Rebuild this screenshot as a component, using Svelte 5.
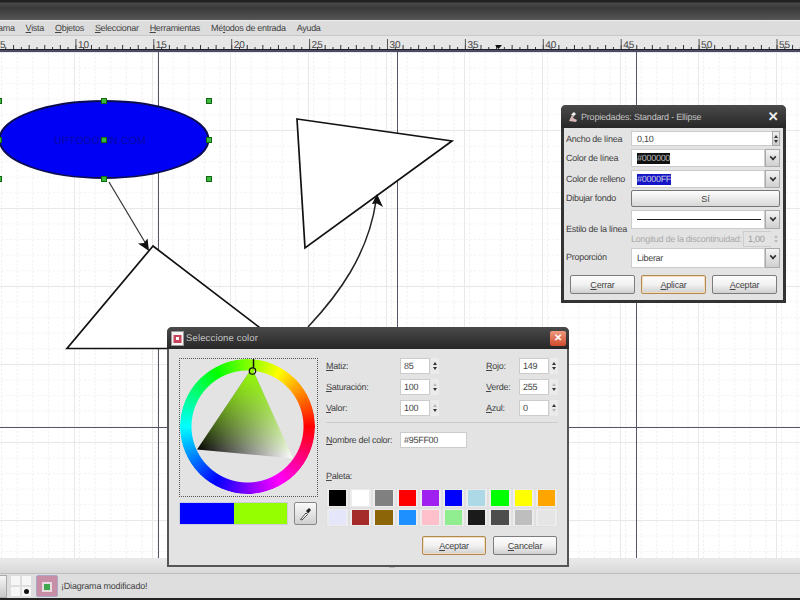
<script>
  const menus = [
    ['ama', ''], ['V', 'ista'], ['O', 'bjetos'], ['S', 'eleccionar'], ['H', 'erramientas'], ['Mé', 'todos de entrada'], ['Ayuda', '']
  ];
  const labels = [5, 10, 15, 20, 25, 30, 35, 40, 45, 50, 55];
  const ticks = Array.from({ length: 104 }, (_, i) => i * 7.79 - 2);
  const handles = [[-1,101],[104,101],[209,101],[-1,140],[104,140],[209,140],[-1,179],[104,179],[209,179]];
  const palette = ['#000000','#ffffff','#808080','#ff0000','#a020f0','#0000ff','#add8e6','#00ff00','#ffff00','#ffa500',
    '#e6e6fa','#a52a2a','#8b6508','#1e90ff','#ffc0cb','#90ee90','#1a1a1a','#4d4d4d','#bebebe','#e5e5e5'];
  const hsv = [['M','atiz:','85',1,1],['S','aturación:','100',0,1],['V','alor:','100',0,1]];
  const rgb = [['R','ojo:','149',1,1],['V','erde:','255',0,1],['A','zul:','0',1,0]];
</script>

<div class="app">
  <div class="titlebar"></div>
  <nav class="menubar">
    {#each menus as m, i}
      <span class="menu">{#if m[1] && i !== 5}<u>{m[0]}</u>{m[1]}{:else if i === 5}Mé<u>t</u>odos de entrada{:else}{m[0]}{/if}</span>
    {/each}
  </nav>
  <div class="ruler">
    <svg width="800" height="16" viewBox="0 0 800 16">
      {#each ticks as t, i}
        <line x1={t} x2={t} y1={i % 2 === 0 ? 9 : 11} y2="13" stroke="#333" stroke-width="1"></line>
      {/each}
      {#each labels as l, i}
        <line x1={-2 + i * 77.9} x2={-2 + i * 77.9} y1="3" y2="13" stroke="#555"></line>
        <text x={i * 77.9} y="12" class="rl">{l}</text>
      {/each}
      <path d="M495 9h7l-3.500 4z" fill="#111"></path>
      <rect x="0" y="13" width="800" height="1" fill="#222"></rect>
      <rect x="0" y="14" width="800" height="2" fill="#4b4a68"></rect>
    </svg>
  </div>

  <main class="canvas">
    <svg class="drawing" width="800" height="508" viewBox="0 52 800 508">
      <defs>
        <pattern id="minor" width="15.6" height="15.6" patternUnits="userSpaceOnUse" x="2" y="6">
          <path d="M15.500 0V15.600M0 15.500H15.600" fill="none" stroke="#e4e4e4" stroke-dasharray="2 2"></path>
        </pattern>
        <pattern id="major" width="78" height="78" patternUnits="userSpaceOnUse" x="-3" y="53">
          <path d="M77.500 0V78M0 77.500H78" fill="none" stroke="#e8e8e8"></path>
        </pattern>
      </defs>
      <rect x="0" y="52" width="800" height="506" fill="#fff"></rect>
      <rect x="0" y="52" width="800" height="506" fill="url(#minor)"></rect>
      <rect x="0" y="52" width="800" height="506" fill="url(#major)"></rect>
      <rect x="0" y="558" width="800" height="2" fill="#e8e8e8"></rect>
      <path d="M158.500 52V558M397.500 52V558M636.500 52V558M0 427.500H800" stroke="#55556a" fill="none"></path>

      <ellipse cx="104" cy="139.500" rx="104.500" ry="38.500" fill="#0000f5" stroke="#0c0c50" stroke-width="1.800"></ellipse>
      <text x="100" y="144" class="wm" text-anchor="middle">UPTODOWN.COM</text>

      <path d="M109 182L146 244" stroke="#333" stroke-width="1.200" fill="none"></path>
      <path d="M149 251L138 243.500L144 243L147.500 238.500Z" fill="#111"></path>
      <path d="M153 246L67 348.500H287Z" fill="#fff" stroke="#111" stroke-width="1.700"></path>
      <path d="M297 119L452 141L305 248Z" fill="#fff" stroke="#111" stroke-width="1.700"></path>
      <path d="M308 327C338 295 368 255 376 201" stroke="#222" stroke-width="1.500" fill="none"></path>
      <path d="M377 194L383 207L377 203.500L372 204Z" fill="#111"></path>

      {#each handles as h}
        <rect x={h[0] - 2.500} y={h[1] - 2.500} width="5" height="5" fill="#3db83d" stroke="#0f6a0f"></rect>
      {/each}
    </svg>

    <section class="win props">
      <header class="wtitle">
        <svg class="ticon" width="12" height="12" viewBox="0 0 12 12"><path d="M2 10L5 4l2 1-1 2 4 2-1 2z" fill="#d8b8b8"></path><path d="M4 3.500L7 1l2 2-2 2z" fill="#eee"></path></svg>
        <span class="ttext">Propiedades: Standard - Ellipse</span>
        <span class="x">✕</span>
      </header>
      <div class="pbody">
        <div class="prow r1"><span>Ancho de línea</span>
          <span class="entry spin1">0,10<span class="arrows"><i class="up"></i><i class="dn"></i></span></span>
        </div>
        <div class="prow r2"><span>Color de línea</span>
          <div class="combo"><span class="cval"><b class="sel blk">#000000</b></span><span class="cbtn"></span></div>
        </div>
        <div class="prow r3"><span>Color de relleno</span>
          <div class="combo"><span class="cval"><b class="sel blu">#0000FF</b></span><span class="cbtn"></span></div>
        </div>
        <div class="prow r4"><span>Dibujar fondo</span><button class="toggle">Sí</button></div>
        <div class="prow r5"><span class="mid">Estilo de la línea</span>
          <div class="linebox">
            <div class="combo c5"><span class="cval"><i class="ln"></i></span><span class="cbtn"></span></div>
            <div class="dash"><span>Longitud de la discontinuidad:</span><span class="dashval">1,00<span class="arrows dis"><i class="up"></i><i class="dn"></i></span></span></div>
          </div>
        </div>
        <div class="prow r6"><span>Proporción</span>
          <div class="combo c6"><span class="cval">Liberar</span><span class="cbtn"></span></div>
        </div>
        <div class="pbtns">
          <button class="btn"><u>C</u>errar</button>
          <button class="btn def"><u>A</u>plicar</button>
          <button class="btn"><u>A</u>ceptar</button>
        </div>
      </div>
    </section>

    <section class="win colors">
      <header class="wtitle ctitle">
        <svg class="dicon" width="13" height="15" viewBox="0 0 13 15"><rect x=".5" y=".5" width="12" height="14" fill="#f5f5f5" stroke="#999"></rect><rect x="2.500" y="4" width="8" height="8" fill="#c7445c"></rect><rect x="5" y="6" width="3" height="3" fill="#fff"></rect></svg>
        <span class="ttext t2">Seleccione color</span>
        <span class="xred">✕</span>
      </header>
      <div class="cbody">
        <div class="cleft">
          <div class="wheelbox">
            <div class="wheel"></div>
            <svg class="tri" width="135" height="135" viewBox="0 0 135 135">
              <defs>
                <linearGradient id="bw" gradientUnits="userSpaceOnUse" x1="17" y1="90" x2="113" y2="99">
                  <stop offset="0" stop-color="#000"></stop><stop offset="1" stop-color="#fff"></stop>
                </linearGradient>
                <linearGradient id="hue" gradientUnits="userSpaceOnUse" x1="72" y1="9" x2="65" y2="95">
                  <stop offset="0" stop-color="#95ff00"></stop><stop offset="1" stop-color="#95ff00" stop-opacity="0"></stop>
                </linearGradient>
              </defs>
              <path d="M72 9L17 90.500L113 99.500Z" fill="url(#bw)"></path>
              <path d="M72 9L17 90.500L113 99.500Z" fill="url(#hue)"></path>
              <path d="M73.500 0V9" stroke="#111" stroke-width="1.500"></path>
              <circle cx="72.500" cy="12" r="3.200" fill="none" stroke="#111" stroke-width="1.300"></circle>
            </svg>
          </div>
          <div class="swrow">
            <div class="swatches"><i class="old"></i><i class="new"></i></div>
            <button class="pick" aria-label="Cuentagotas">
              <svg width="14" height="15" viewBox="0 0 14 15"><path d="M1.500 13.500L7 7l1.500 1.500L3 14z" fill="#fff" stroke="#333" stroke-width=".9"></path><path d="M7 5l3-3 2 2-3 3.500z" fill="#222"></path></svg>
            </button>
          </div>
        </div>
        <div class="cright">
          <div class="fields">
            <div class="col">
              {#each hsv as f}
                <div class="frow"><span class="flabel w1"><u>{f[0]}</u>{f[1]}</span>
                  <span class="num">{f[2]}</span>
                  <span class="arrows nf"><i class="up" class:off={!f[3]}></i><i class="dn" class:off={!f[4]}></i></span>
                </div>
              {/each}
            </div>
            <div class="col">
              {#each rgb as f}
                <div class="frow"><span class="flabel w2"><u>{f[0]}</u>{f[1]}</span>
                  <span class="num">{f[2]}</span>
                  <span class="arrows nf"><i class="up" class:off={!f[3]}></i><i class="dn" class:off={!f[4]}></i></span>
                </div>
              {/each}
            </div>
          </div>
          <hr />
          <div class="namerow"><span class="flabel w1"><u>N</u>ombre del color:</span><span class="nameval">#95FF00</span></div>
          <div class="plabel"><u>P</u>aleta:</div>
          <div class="palette">
            {#each palette as c}
              <span class="pcell"><i style="background:{c}"></i></span>
            {/each}
          </div>
          <div class="cbtns">
            <button class="btn b2 def"><u>A</u>ceptar</button>
            <button class="btn b2"><u>C</u>ancelar</button>
          </div>
        </div>
      </div>
    </section>
  </main>

  <div class="hscroll"><span class="grip"></span></div>

  <footer class="status">
    <span class="sbtn"></span>
    <span class="snap"><i></i><i></i><i></i><i class="dot"></i></span>
    <span class="layer"><i></i></span>
    <span class="smsg">¡Diagrama modificado!</span>
  </footer>
</div>

<style>
  :global(body) { margin: 0; background: #fff; }
  .app { width: 800px; height: 600px; overflow: hidden; display: flex; flex-direction: column; font-family: "Liberation Sans", Arial, sans-serif; font-size: 9px; letter-spacing: -.28px; color: #444; text-rendering: geometricPrecision; }
  u { text-decoration: underline; }
  i { display: block; font-style: normal; }
  .titlebar { height: 20px; flex: none; background: linear-gradient(#222 0, #222 2px, #4a4a4a 3px, #3a3a3a 8px, #555 20px); }
  .menubar { height: 16px; flex: none; box-sizing: border-box; background: #dcdcdc; border-top: 1px solid #eee; border-bottom: 1px solid #c8c8c8; display: flex; align-items: center; gap: 11px; margin-left: -2px; margin-right: -2px; letter-spacing: -.3px; }
  .ruler { height: 16px; flex: none; background: #e6e6e6; }
  .ruler svg { display: block; }
  .rl { font: 10px "Liberation Sans", sans-serif; fill: #444; letter-spacing: 0; }
  .canvas { position: relative; z-index: 1; height: 508px; flex: none; }
  .drawing { display: block; }
  .wm { font: 10.500px "Liberation Sans", sans-serif; fill: #0808a4; letter-spacing: .2px; }

  .hscroll { height: 13px; flex: none; box-sizing: border-box; background: linear-gradient(#e8e8e8, #d8d8d8); display: flex; padding-left: 389px; padding-top: 6px; }
  .grip { width: 6px; height: 2px; background: #bbb; }

  .win { position: absolute; box-sizing: border-box; background: #e3e3e3; border-radius: 5px 5px 0 0; }
  .props { left: 561px; top: 53px; width: 225px; height: 198px; border: 3px solid #333; border-top: 0; }
  .colors { left: 167px; top: 275px; width: 402px; height: 240px; border: 2px solid #555; border-top: 0; border-bottom-width: 2px; }
  .wtitle { display: flex; align-items: center; height: 23px; background: linear-gradient(#4a4a4a, #272727); color: #c4c4c4; margin: 0 -3px; padding: 0 5px 0 6px; border-radius: 5px 5px 0 0; }
  .ctitle { height: 22px; margin: 0 -2px; padding: 0 3px 0 4px; }
  .ticon { margin-right: 2px; }
  .dicon { margin-right: 2px; }
  .ttext { flex: 1; font-size: 9px; letter-spacing: -.2px; }
  .t2 { font-size: 9.500px; letter-spacing: .15px; }
  .x { font-size: 13px; font-weight: bold; color: #eee; width: 16px; text-align: center; }
  .xred { width: 16px; height: 15px; font-size: 10px; font-weight: bold; color: #fff; background: linear-gradient(#ee9a80, #cf4a2a); border-radius: 2px; display: flex; align-items: center; justify-content: center; }

  .pbody { display: flex; flex-direction: column; padding: 3px 3px 0 2px; }
  .prow { display: grid; grid-template-columns: 65px minmax(0, 1fr); align-items: start; white-space: nowrap; }
  .prow > span:first-child { line-height: 16px; }
  .prow > span.mid { align-self: center; }
  .r1 { height: 18px; }
  .r2 { height: 21px; }
  .r3, .r4 { height: 20px; }
  .r5 { height: 38px; }
  .r6 { height: 22px; }
  .r2 > span:first-child, .r3 > span:first-child, .r6 > span:first-child { line-height: 18px; }
  .entry { position: relative; background: #fff; border: 1px solid #ccc; height: 15px; line-height: 14px; padding-left: 5px; box-sizing: border-box; }
  .arrows { display: flex; flex-direction: column; gap: 2px; align-items: center; justify-content: center; }
  .spin1 .arrows { position: absolute; right: -1px; top: -1px; bottom: -1px; width: 8px; background: linear-gradient(#f0f0f0, #ccc); border: 1px solid #aaa; box-sizing: border-box; }
  .up { width: 0; height: 0; border: 2.500px solid transparent; border-top: 0; border-bottom: 3px solid #333; }
  .dn { width: 0; height: 0; border: 2.500px solid transparent; border-bottom: 0; border-top: 3px solid #333; }
  .up.off { border-bottom-color: #bbb; }
  .dn.off { border-top-color: #bbb; }
  .combo { display: flex; height: 18px; }
  .cval { flex: 1; background: #fff; border: 1px solid #ccc; padding-left: 5px; display: flex; align-items: center; box-sizing: border-box; min-width: 0; }
  .cbtn { width: 15px; flex: none; position: relative; background: linear-gradient(#f4f4f4, #cfcfcf); border: 1px solid #aaa; box-sizing: border-box; }
  .cbtn::after { content: ""; position: absolute; left: 4px; top: 4px; width: 4px; height: 4px; border: solid #333; border-width: 0 2px 2px 0; transform: rotate(45deg) scale(.8); }
  .c5 { height: 19px; }
  .c6 { height: 20px; }
  .sel { font-weight: normal; padding: 0; line-height: 11px; }
  .blk { background: #111; color: #bbb; }
  .blu { background: #1515c8; color: #ccd; }
  .toggle { height: 17px; padding: 0; background: linear-gradient(#fdfdfd, #d8d8d8); border: 1px solid #777; border-radius: 2px; font: 9px "Liberation Sans", sans-serif; color: #444; }
  .linebox { display: flex; flex-direction: column; min-width: 0; }
  .ln { flex: 1; height: 1.500px; background: #222; margin-right: 3px; }
  .dash { display: flex; align-items: center; justify-content: space-between; height: 19px; color: #aaa; }
  .dashval { position: relative; width: 37px; height: 16px; line-height: 15px; box-sizing: border-box; border: 1px solid #ccc; padding-left: 4px; color: #999; }
  .dashval .arrows { position: absolute; right: -1px; top: -1px; bottom: -1px; width: 9px; background: #e3e3e3; }
  .dis .up { border-bottom-color: #bbb; }
  .dis .dn { border-top-color: #bbb; }
  .pbtns { display: flex; gap: 6px; padding: 5px 0 0 4px; }
  .btn { width: 65px; height: 19px; padding: 0; background: linear-gradient(#fcfcfc 0, #f2f2f2 50%, #cfcfcf 100%); border: 1px solid #7c7c7c; border-radius: 2px; font: 9px "Liberation Sans", sans-serif; color: #444; letter-spacing: -.2px; }
  .btn.def { border-color: #b08a50; box-shadow: inset 0 0 0 1px #f1dcc0; }

  .cbody { display: flex; padding: 9px 9px 0 10px; }
  .cleft { width: 139px; flex: none; display: flex; flex-direction: column; gap: 5px; }
  .wheelbox { position: relative; width: 137px; height: 137px; border: 1px dotted #555; box-sizing: content-box; }
  .wheel { position: absolute; left: 0; top: 0; width: 135px; height: 135px; border-radius: 50%; background: conic-gradient(from 90deg, #f00, #f0f, #00f, #0ff, #0f0, #ff0, #f00); mask: radial-gradient(circle, transparent 55.500px, #000 56.500px); -webkit-mask: radial-gradient(circle, transparent 55.500px, #000 56.500px); }
  .tri { position: absolute; left: 0; top: 0; }
  .swrow { display: flex; align-items: center; justify-content: space-between; width: 138px; }
  .swatches { display: flex; border: 1px solid #ccd; }
  .swatches i { width: 53.500px; height: 21px; }
  .old { background: #0000ff; }
  .new { background: #95ff00; }
  .pick { width: 23px; height: 23px; padding: 0; display: flex; align-items: center; justify-content: center; background: linear-gradient(#fafafa, #cfcfcf); border: 1px solid #888; border-radius: 2px; }
  .cright { flex: 1; padding-left: 8px; display: flex; flex-direction: column; min-width: 0; }
  .fields { display: flex; justify-content: space-between; }
  .col { display: flex; flex-direction: column; gap: 5px; }
  .frow { display: flex; align-items: center; height: 16px; }
  .flabel { display: block; }
  .w1 { width: 74px; }
  .w2 { width: 33px; }
  .num { width: 30px; height: 16px; line-height: 14px; box-sizing: border-box; background: #fff; border: 1px solid #ccc; padding-left: 3px; }
  .nf { width: 8px; margin-left: 1px; height: 16px; gap: 2px; background: #ebebeb; }
  hr { border: 0; border-top: 1px solid #ccc; margin: 6px 0 9px; }
  .namerow { display: flex; align-items: center; height: 16px; }
  .nameval { width: 67px; height: 16px; line-height: 14px; box-sizing: border-box; background: #fff; border: 1px solid #ccc; padding-left: 3px; }
  .plabel { margin-top: 23px; height: 14px; }
  .palette { display: grid; grid-template-columns: repeat(10, 23.2px); grid-auto-rows: 19.500px; margin-top: 3px; }
  .pcell { background: #ececec; border: 1px solid #e0e0e0; box-sizing: border-box; display: block; padding: 1px 2px; }
  .pcell i { height: 100%; }
  .cbtns { display: flex; justify-content: flex-end; gap: 7px; margin-top: 9px; padding-right: 1px; }
  .b2 { width: 64px; }

  .status { height: 27px; flex: none; background: #dedede; border-top: 1px solid #bdbdbd; border-bottom: 2px solid #222; box-sizing: border-box; display: flex; align-items: center; }
  .sbtn { width: 7px; height: 23px; background: linear-gradient(#f6f6f6, #c9c9c9); border: 1px solid #aaa; border-left: 0; box-sizing: border-box; }
  .snap { display: grid; grid-template-columns: 9px 9px; grid-auto-rows: 9px; gap: 2px; margin-left: 4px; }
  .snap i { background: #f6f6f6; position: relative; }
  .snap .dot::after { content: ""; position: absolute; left: 2px; top: 2px; width: 5px; height: 5px; background: #111; border-radius: 50%; }
  .layer { width: 22px; height: 22px; margin-left: 5px; box-sizing: border-box; border: 1px solid #a8a8c4; background: #c88ea6; padding: 8px 7px; border-radius: 2px; display: block; }
  .layer i { width: 6px; height: 6px; background: #3fa84a; box-shadow: 0 0 0 2px #e8dce2; }
  .smsg { margin-left: 3px; letter-spacing: -.2px; }
</style>
